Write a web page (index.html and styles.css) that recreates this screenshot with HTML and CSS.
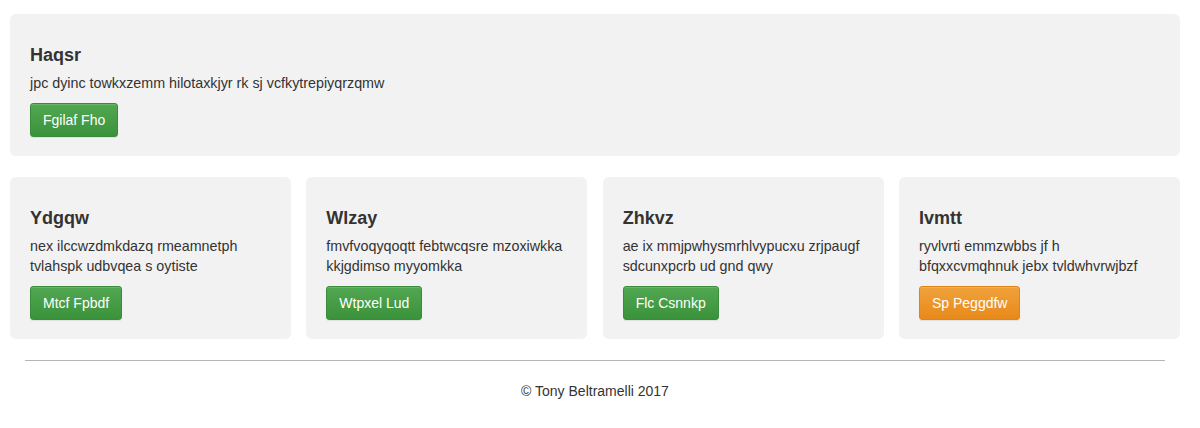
FILE: index.html
```html
<!DOCTYPE html>
<html>
<head>
<meta charset="utf-8">
<link rel="stylesheet" href="styles.css">
</head>
<body>
<div class="page">
  <div class="card wide">
    <h4 class="title">Haqsr</h4>
    <p class="text">jpc dyinc towkxzemm hilotaxkjyr rk sj vcfkytrepiyqrzqmw</p>
    <a class="btn green">Fgilaf Fho</a>
  </div>
  <div class="row">
    <div class="card">
      <h4 class="title">Ydgqw</h4>
      <p class="text">nex ilccwzdmkdazq rmeamnetph tvlahspk udbvqea s oytiste</p>
      <a class="btn green">Mtcf Fpbdf</a>
    </div>
    <div class="card">
      <h4 class="title">Wlzay</h4>
      <p class="text">fmvfvoqyqoqtt febtwcqsre mzoxiwkka kkjgdimso myyomkka</p>
      <a class="btn green">Wtpxel Lud</a>
    </div>
    <div class="card">
      <h4 class="title">Zhkvz</h4>
      <p class="text">ae ix mmjpwhysmrhlvypucxu zrjpaugf sdcunxpcrb ud gnd qwy</p>
      <a class="btn green">Flc Csnnkp</a>
    </div>
    <div class="card">
      <h4 class="title">Ivmtt</h4>
      <p class="text">ryvlvrti emmzwbbs jf h bfqxxcvmqhnuk jebx tvldwhvrwjbzf</p>
      <a class="btn orange">Sp Peggdfw</a>
    </div>
  </div>
  <hr class="rule">
  <footer class="footer">© Tony Beltramelli 2017</footer>
</div>
</body>
</html>
```

FILE: styles.css
```css
* { box-sizing: border-box; }
html, body { margin: 0; padding: 0; background: #fff; }
body {
  font-family: "Liberation Sans", Arial, Helvetica, sans-serif;
  font-size: 14px;
  line-height: 20px;
  color: #333;
}
.page {
  padding: 14px 20px 0 10px;
}
.card {
  background: #f2f2f2;
  border-radius: 6px;
  padding: 29px 20px 19px 20px;
}
.wide { margin-bottom: 21px; }
.row {
  display: grid;
  grid-template-columns: repeat(4, 1fr);
  column-gap: 15.33px;
}
.title {
  margin: 0 0 6px 0;
  font-size: 18px;
  line-height: 24px;
  font-weight: bold;
  color: #333;
}
.text {
  margin: 0 0 10px 0;
  font-size: 14.3px;
  line-height: 20px;
}
.btn {
  display: inline-block;
  padding: 6px 12px;
  font-size: 14px;
  line-height: 20px;
  color: #fff;
  border-radius: 3px;
  border: 1px solid transparent;
  text-decoration: none;
  box-shadow: inset 0 1px 0 rgba(255,255,255,0.15), 0 1px 1px rgba(0,0,0,0.075);
}
.green {
  background: linear-gradient(to bottom, #52a852 0%, #3a923a 100%);
  border-color: #3b8b3b;
}
.orange {
  background: linear-gradient(to bottom, #f0a23c 0%, #e8891a 100%);
  border-color: #de8418;
}
.rule {
  margin: 21px 15px 0 15px;
  border: 0;
  border-top: 1px solid #b5b5b5;
  height: 0;
}
.footer {
  text-align: center;
  padding-top: 20px;
  font-size: 14px;
  line-height: 20px;
}
```
